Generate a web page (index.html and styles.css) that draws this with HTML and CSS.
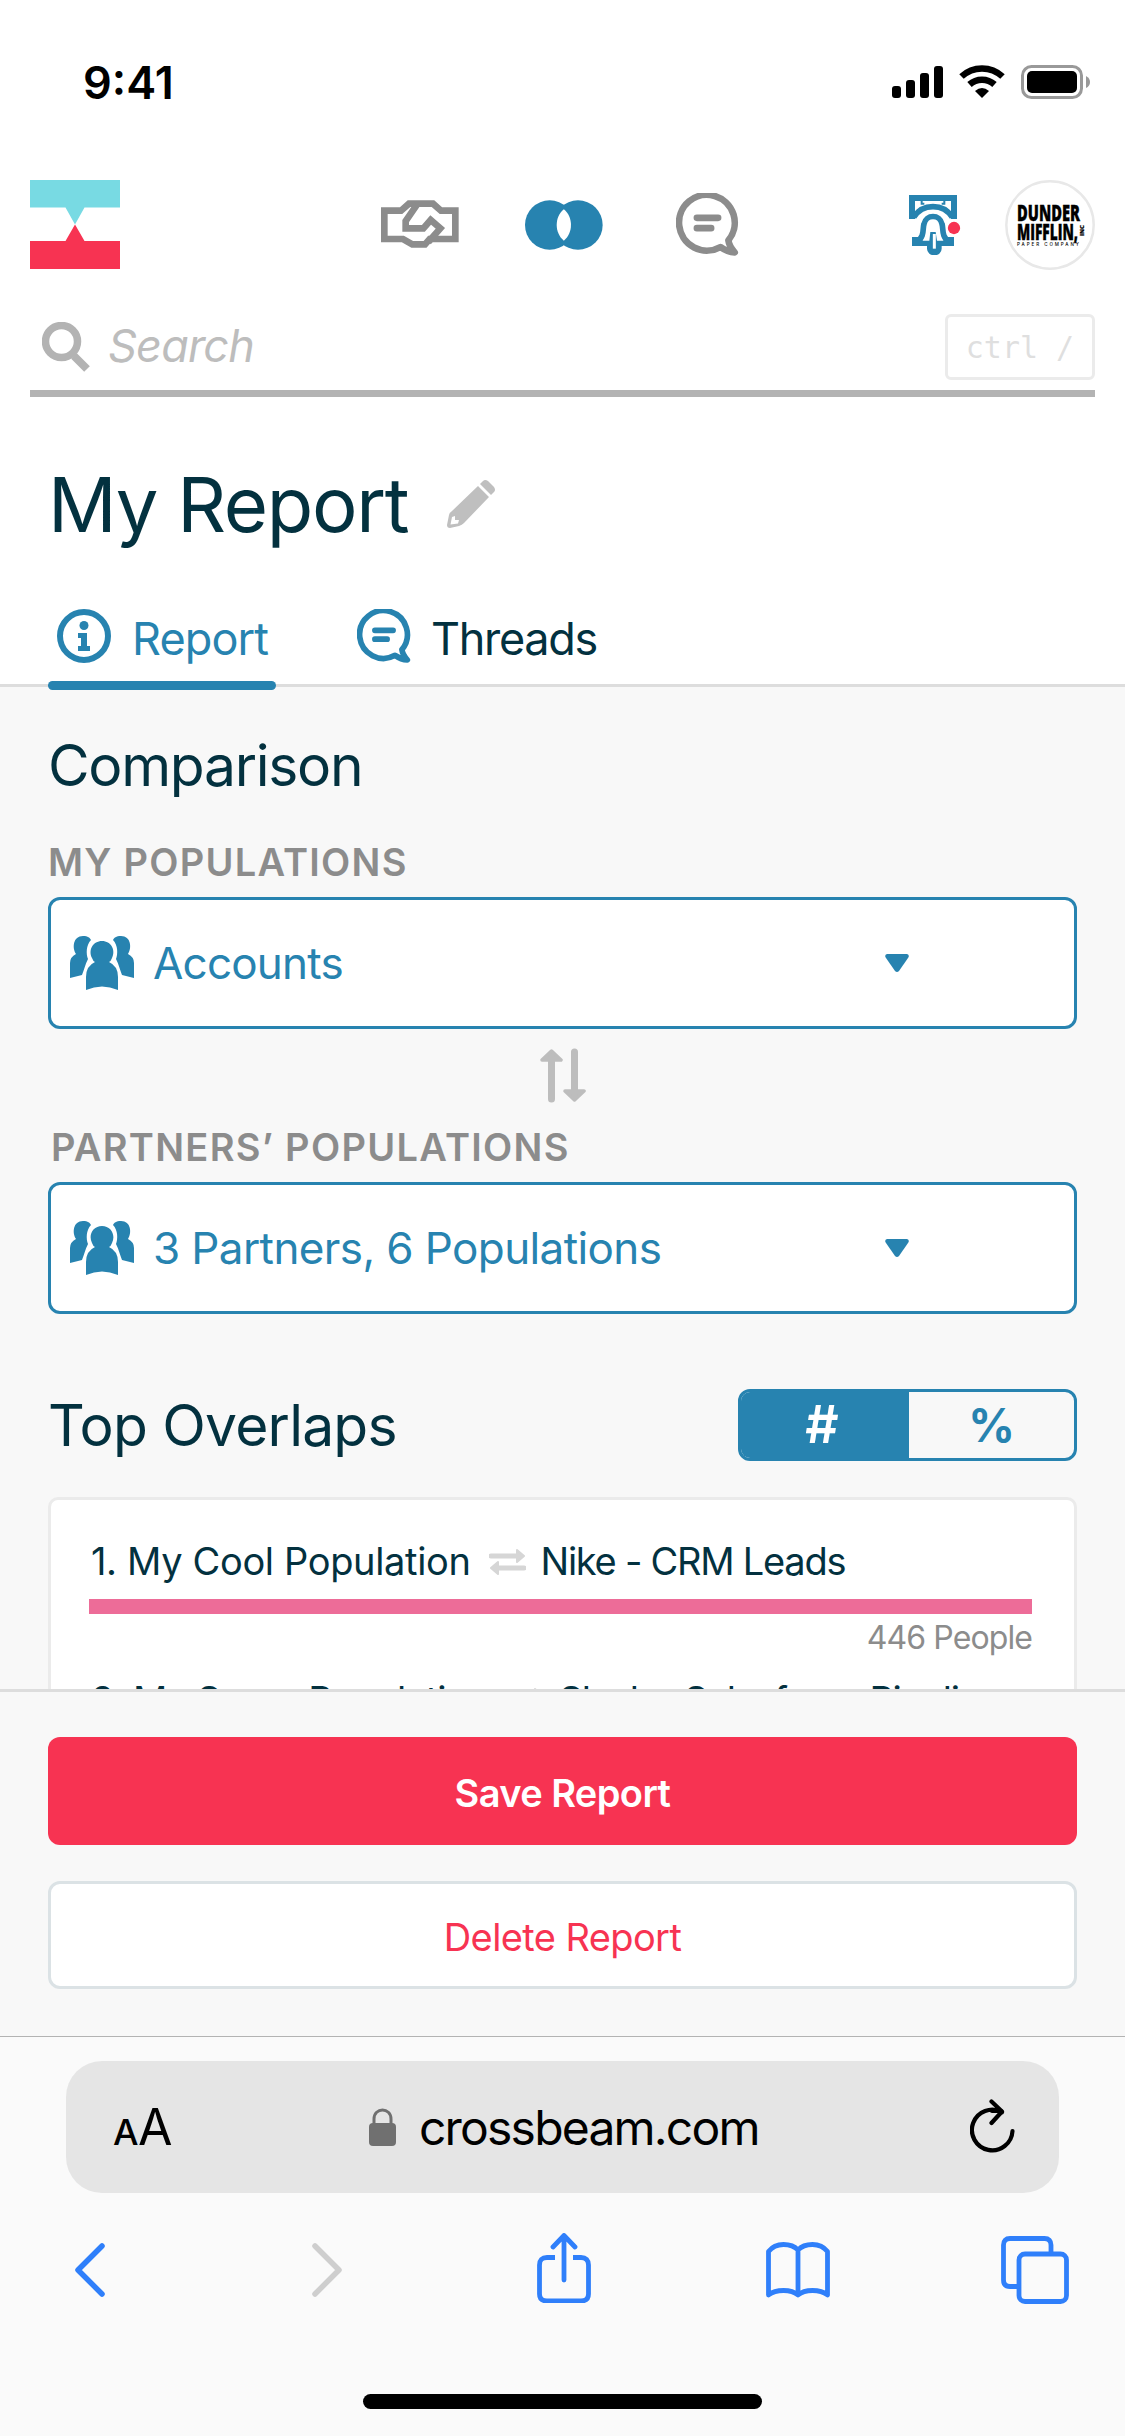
FILE: index.html
```html
<!DOCTYPE html>
<html lang="en">
<head>
<meta charset="utf-8">
<title>My Report</title>
<link rel="stylesheet" href="styles.css">
</head>
<body>
<svg class="defs" width="0" height="0">
  <symbol id="chat" viewBox="0 0 190 190">
    <path d="M134 163A84 84 0 1 1 158 143Q160 160 177 179Q155 178 134 163Z" fill="none" stroke="currentColor" stroke-width="20" stroke-linejoin="round"/>
    <path d="M63 75H127M63 106H106" stroke="currentColor" stroke-width="20" stroke-linecap="round"/>
  </symbol>
  <symbol id="people" viewBox="0 0 64 54">
    <path d="M13 0C18 0 20 2 21 4C16 9 16 18 18 23C15 29 14 34 12 39L0 42V27Q0 21 6 18C2 12 3 0 13 0Z"/>
    <path d="M51 0C46 0 44 2 43 4C48 9 48 18 46 23C49 29 50 34 52 39L64 42V27Q64 21 58 18C62 12 61 0 51 0Z"/>
    <path d="M32 5C41 5 46 14 42 22Q41 25 39 26Q48 30 48 41V54Q32 47 16 54V41Q16 30 25 26Q23 25 22 22C18 14 23 5 32 5Z"/>
  </symbol>
  <symbol id="swap" viewBox="0 0 37 27">
    <path d="M2 8H30M35 20H7" stroke="currentColor" stroke-width="5" stroke-linecap="round"/>
    <path d="M28 2L35 8L28 14ZM9 14L2 20L9 26Z" fill="currentColor" stroke="currentColor" stroke-width="2" stroke-linejoin="round"/>
  </symbol>
  <symbol id="caret" viewBox="0 0 24 18">
    <path d="M2 0H22Q25 1 23 4L14 17Q12 19 10 17L1 4Q-1 1 2 0Z"/>
  </symbol>
</svg>

<div class="status">
  <div class="time">9:41</div>
  <svg class="signal" viewBox="0 0 51 33"><rect y="20" width="9" height="12" rx="3"/><rect x="14" y="14" width="9" height="18" rx="3"/><rect x="28" y="7" width="9" height="25" rx="3"/><rect x="42" width="9" height="32" rx="3"/></svg>
  <svg class="wifi" viewBox="0 0 46 33"><path d="M2.5 11.5A30 30 0 0 1 43.500 11.500M10.500 19.500A18.500 18.500 0 0 1 35.500 19.500" fill="none" stroke="#000" stroke-width="6.500"/><path d="M16 26Q23 20 30 26L23 33Z"/></svg>
  <svg class="battery" viewBox="0 0 70 34"><rect x="1.500" y="1.500" width="59" height="31" rx="9" fill="none" stroke="#999" stroke-width="3"/><rect x="6" y="6" width="50" height="22" rx="5"/><path d="M65 11Q69 13 69 17T65 23Z" fill="#999"/></svg>
</div>

<header class="topbar">
  <svg class="logo" viewBox="0 0 90 90"><path d="M0 0H90V27.500H54.500L45 44.500L35.500 27.500H0Z" fill="#78dae3"/><path d="M0 89V61H35.500L45 44.500L54.500 61H90V89Z" fill="#f73352"/></svg>
  <svg class="shake" viewBox="18 90 234 144" fill="none" stroke="#8c8c8c" stroke-width="20"><path d="M28 122H78L102 101H174L198 122H241V207H164L150 223H112L84 207H28Z"/><path d="M126 104L92 153V175H145L167 150L196 175L160 216"/></svg>
  <svg class="venn" viewBox="450 90 234 150"><circle cx="524" cy="165" r="74"/><circle cx="609" cy="165" r="74"/><path d="M566.500 118C595 140 595 190 566.500 212C538 190 538 140 566.500 118Z" fill="#fff"/></svg>
  <svg class="chat"><use href="#chat"/></svg>
  <svg class="bell" viewBox="42 75 156 180">
    <g fill="none" stroke="#2783b0"><path d="M51 147V84H177V147" stroke-width="18"/><path d="M56 142Q76 110 114 110T172 142" stroke-width="17"/><path d="M80 90V101H88M148 90V101H140" stroke-width="6"/><path d="M66 214C90 200 82 176 87 162C93 132 135 132 141 162C146 176 138 200 162 214" stroke-width="17"/></g>
    <path d="M51 201H72L84 212H103L106 186H122L126 212H144L156 201H177V228H140V236A22 20 0 0 1 96 236V228H51Z" fill="#2783b0"/>
    <path d="M118 192V236" stroke="#fff" stroke-width="9"/>
    <circle cx="177" cy="174" r="18.500" fill="#f73352"/>
  </svg>
  <svg class="avatar" viewBox="0 0 90 90"><circle cx="45" cy="45" r="43.700" fill="#fff" stroke="#e8e8e8" stroke-width="2.500"/>
    <g class="brand"><text x="12" y="41" font-size="22" textLength="63" lengthAdjust="spacingAndGlyphs">DUNDER</text><text x="12" y="59.500" font-size="22" textLength="61" lengthAdjust="spacingAndGlyphs">MIFFLIN,</text><text class="inc" font-size="5" textLength="11" lengthAdjust="spacingAndGlyphs" transform="translate(78.500 56) rotate(-90)">INC</text></g>
    <text class="paper" x="12" y="65.500" font-size="4.500" textLength="62">PAPER COMPANY</text></svg>
</header>

<div class="search">
  <svg class="glass" viewBox="0 0 48 50" fill="none" stroke="#b3b3b3"><circle cx="19.500" cy="19.500" r="16" stroke-width="7.500"/><path d="M32 34L45 47" stroke-width="8"/></svg>
  <span class="placeholder">Search</span>
  <kbd>ctrl /</kbd>
</div>

<div class="title">
  <h1>My Report</h1>
  <svg class="pencil" viewBox="0 0 48 48"><path d="M31 6L42 17L17 43Q15 45 12 46L3 48Q0 48 0 45L2 35Q2 33 5 31ZM5 37L3.500 44.500L11 43.500L12 40L8 40L8 36Z" fill-rule="evenodd"/><path d="M33 4L36 1Q38-1 41 1L47 7Q49 10 47 12L44 15Z"/></svg>
</div>

<nav class="tabs">
  <a class="tab active"><svg class="tabicon" viewBox="0 0 54 54"><circle cx="27" cy="27" r="24" fill="none" stroke="currentColor" stroke-width="6"/><circle cx="27" cy="16.500" r="4.500"/><path d="M21 24H30V37H33V42H21V37H24V29H21Z"/></svg><span>Report</span></a>
  <a class="tab"><svg class="tabicon"><use href="#chat"/></svg><span>Threads</span></a>
</nav>

<main>
  <h2 class="comparison">Comparison</h2>
  <h3>MY POPULATIONS</h3>
  <div class="select"><svg class="people"><use href="#people"/></svg><span>Accounts</span><svg class="caret"><use href="#caret"/></svg></div>
  <div class="between"><svg viewBox="0 0 46 56"><path d="M11.500 10V51M34.500 4V45" stroke="#bdbdbd" stroke-width="7" stroke-linecap="round"/><path d="M11.500 3L21 12H2ZM34.500 52L44 43H25Z" fill="#bdbdbd" stroke="#bdbdbd" stroke-width="3.500" stroke-linejoin="round"/></svg></div>
  <h3 class="partners">PARTNERS’ POPULATIONS</h3>
  <div class="select"><svg class="people"><use href="#people"/></svg><span class="count">3 Partners, 6 Populations</span><svg class="caret"><use href="#caret"/></svg></div>
  <div class="overlaps"><h2>Top Overlaps</h2><div class="toggle"><b class="on">#</b><b>%</b></div></div>
  <section class="card">
    <div class="row"><div class="names"><span class="mine">1. My Cool Population</span><svg class="swap"><use href="#swap"/></svg><span class="theirs">Nike - CRM Leads</span></div><div class="bar"></div><div class="people-count">446 People</div></div>
    <div class="row"><div class="names"><span class="mine tight">2. My Super Population</span><svg class="swap"><use href="#swap"/></svg><span class="theirs tight">Slack - Salesforce Pipeline</span></div></div>
  </section>
</main>

<div class="actions"><button class="save">Save Report</button><button class="delete">Delete Report</button></div>

<footer>
  <div class="url"><span class="aa"><small>A</small>A</span>
    <svg class="lock" viewBox="0 0 27 38"><rect y="15" width="27" height="23" rx="4" fill="#707070"/><path d="M5 17V11C5-1 22-1 22 11V17" fill="none" stroke="#707070" stroke-width="3"/></svg>
    <span class="domain">crossbeam.com</span>
    <svg class="reload" viewBox="0 0 45 54" fill="none" stroke="#000" stroke-width="4.200" stroke-linecap="round" stroke-linejoin="round"><path d="M42.500 32A20.300 20.300 0 1 1 32 13.200M21.500 2.500L32 12.500L21.500 24"/><path d="M22 12H31"/></svg></div>
  <div class="tools">
    <svg class="back" viewBox="0 0 30 54"><path d="M27 3L3 27L27 51" stroke-width="5.500"/></svg>
    <svg class="forward" viewBox="0 0 30 54"><path d="M3 3L27 27L3 51" stroke-width="5.500"/></svg>
    <svg class="share" viewBox="0 0 54 70"><path d="M18 24.500H10Q2.500 24.500 2.500 32V61Q2.500 68 10 68H44Q51.500 68 51.500 61V32Q51.500 24.500 44 24.500H36" stroke-linecap="butt"/><path d="M27 47V3M16 14L27 2.500L38 14"/></svg>
    <svg class="book" viewBox="0 0 64 56"><path d="M32 8Q27 2.500 17.500 2.500T2.500 9.500V53Q8 48.500 17.500 48.500T32 53Q37 48.500 46.500 48.500T61.500 53V9.500Q56 2.500 46.500 2.500T32 8V53"/></svg>
    <svg class="windows" viewBox="0 0 68 68"><rect x="18" y="18" width="47.500" height="47.500" rx="6"/><path d="M50 17V9Q50 2.500 43.500 2.500H9Q2.500 2.500 2.500 9V44Q2.500 50.500 9 50.500H17"/></svg>
  </div>
  <div class="home"></div>
</footer>
</body>
</html>
```
FILE: styles.css
```css
* { box-sizing: border-box; }
body { margin: 0; width: 1125px; height: 2436px; overflow: hidden; display: flex; flex-direction: column; background: #fff; color: #03313f; font-family: Inter, "Liberation Sans", sans-serif; }
h1, h2, h3 { margin: 0; font-weight: 400; white-space: nowrap; }
svg { display: block; flex: none; }
span { white-space: nowrap; }
.defs { position: absolute; }

.status { height: 180px; flex: none; display: flex; padding: 65px 34px 0 0; color: #000; }
.time { margin: -9px auto 0 83px; font-size: 45px; line-height: 54px; font-weight: 600; letter-spacing: 0; }
.signal { width: 51px; height: 33px; margin: 1px 16px 0 0; }
.wifi { width: 46px; height: 33px; margin-right: 16px; }
.battery { width: 70px; height: 34px; }

.topbar { height: 90px; flex: none; display: flex; align-items: flex-start; padding: 0 30px; }
.logo { width: 90px; height: 90px; margin-right: 261px; }
.shake { width: 78px; height: 48px; margin: 20px 66px 0 0; }
.venn { width: 78px; height: 50px; margin: 20px 73px 0 0; fill: #2783b0; }
.chat { width: 63px; height: 63px; margin-top: 13px; color: #8c8c8c; }
.bell { width: 52px; height: 60px; margin: 15px 44px 0 auto; }
.avatar { width: 90px; height: 90px; }
.brand { font-family: "Open Sans", sans-serif; font-weight: 800; stroke: #000; stroke-width: 0.4; }
.inc { stroke-width: 0.2; }
.paper { font-weight: 500; }

.search { height: 97px; flex: none; margin: 30px 30px 0; border-bottom: 7px solid #b3b3b3; display: flex; align-items: flex-start; }
.glass { width: 48px; height: 50px; margin: 22px 0 0 12px; }
.placeholder { margin: 18px auto 0 18px; font-size: 45px; line-height: 56px; font-style: italic; font-weight: 400; letter-spacing: -0.8px; color: #bdbdbd; }
kbd { width: 150px; height: 66px; margin-top: 14px; border: 3px solid #ebebeb; border-radius: 6px; color: #dfdfdf; font: 30px/62px "DejaVu Sans Mono", monospace; text-align: center; white-space: pre; }

.title { height: 212px; flex: none; display: flex; padding: 61px 48px 0; }
h1 { font-size: 76px; line-height: 92px; letter-spacing: -1.3px; width: 399px; }
.pencil { width: 48px; height: 48px; margin-top: 22px; fill: #bfbfbf; }

.tabs { height: 78px; flex: none; display: flex; align-items: flex-start; padding-left: 48px; border-bottom: 3px solid #ddd; }
.tab { display: flex; height: 81px; font-size: 45px; line-height: 54px; padding-left: 9px; letter-spacing: -0.9px; }
.tab span { margin: 3px 0 0 21px; }
.tab + .tab { margin-left: 72px; letter-spacing: -1.3px; }
.tab + .tab span { margin-left: 20px; }
.tabicon { width: 54px; height: 54px; color: #2783b0; fill: #2783b0; }
.active { width: 228px; color: #2783b0; position: relative; }
.active::after { content: ""; position: absolute; left: 0; bottom: 0; width: 228px; height: 9px; border-radius: 5px; background: #2783b0; }

main { height: 1002px; flex: none; overflow: hidden; background: #f8f8f8; padding: 0 48px; }
h2 { font-size: 57px; line-height: 68px; letter-spacing: -0.8px; }
.comparison { padding-top: 45px; height: 154px; letter-spacing: -1.3px; }
h3 { height: 56px; font-size: 38px; line-height: 43px; font-weight: 600; color: #8c8c8c; letter-spacing: 1.25px; }
.partners { padding-left: 3px; letter-spacing: 1.3px; }
.select { height: 132px; border: 3px solid #2783b0; border-radius: 12px; background: #fff; display: flex; align-items: center; padding: 0 165px 0 19px; color: #2783b0; fill: #2783b0; font-size: 44px; }
.select span { margin: 0 auto 0 19px; letter-spacing: -0.8px; }
.select .count { letter-spacing: -0.6px; }
.people { width: 64px; height: 54px; }
.caret { width: 24px; height: 18px; }
.between { height: 97px; padding: 19px 0 0 1px; display: flex; justify-content: center; }
.between svg { width: 46px; height: 56px; }
.overlaps { display: flex; justify-content: space-between; align-items: center; height: 72px; margin: 75px 0 36px; }
.overlaps h2 { padding-top: 2px; }
.toggle { display: flex; width: 339px; height: 72px; border: 3px solid #2783b0; border-radius: 12px; color: #2783b0; overflow: hidden; }
.toggle b { flex: 1; text-align: center; font-size: 46px; line-height: 66px; font-weight: 700; }
.toggle .on { background: #2783b0; color: #fff; flex: 0 0 168px; font-size: 52px; font-weight: 600; padding-right: 6px; }
.card { height: 300px; border: 3px solid #ebebeb; border-radius: 10px; background: #fff; padding: 36px 42px 0 38px; }
.row { height: 139px; }
.names { display: flex; align-items: center; height: 50px; font-size: 38px; padding-left: 2px; }
.mine { letter-spacing: -0.35px; }
.mine.tight { letter-spacing: -0.95px; }
.theirs { letter-spacing: -1.25px; }
.theirs.tight { letter-spacing: -1.4px; }
.swap { width: 37px; height: 27px; margin: 0 15px 0 18px; color: #d6d6d6; }
.bar { height: 15px; margin-top: 13px; background: #ed6c98; }
.people-count { text-align: right; font-size: 32px; line-height: 39px; margin-top: 4px; letter-spacing: -0.9px; color: #8c8c8c; }

.actions { height: 347px; flex: none; background: #f8f8f8; border-top: 3px solid #ddd; padding: 45px 48px 0; display: flex; flex-direction: column; gap: 36px; }
button { height: 108px; border: 0; border-radius: 12px; font: 600 38px Inter, sans-serif; letter-spacing: -0.6px; color: #fff; background: #f73352; padding: 3px 0 0; }
.delete { font-weight: 400; background: #fff; border: 3px solid #dbe2e5; color: #f73352; }

footer { height: 400px; background: #fafafa; border-top: 1px solid #b3b3b3; color: #000; }
.url { width: 993px; height: 132px; margin: 24px 0 0 66px; border-radius: 36px; background: #e5e5e5; display: flex; align-items: flex-start; }
.aa { margin: 35px 0 0 47px; width: 256px; font-size: 50px; line-height: 62px; letter-spacing: -0.5px; }
.aa small { font-size: 36px; font-weight: 500; }
.lock { width: 27px; height: 38px; margin-top: 47px; }
.domain { margin: 36px auto 0 23px; font-size: 48px; line-height: 62px; letter-spacing: -1.8px; }
.reload { width: 45px; height: 54px; margin: 38px 44px 0 0; }
.tools { height: 201px; padding: 0 56px 0 75px; display: flex; align-items: flex-start; fill: none; stroke: #2f7ffa; stroke-width: 4.8px; stroke-linecap: round; stroke-linejoin: round; }
.back { width: 30px; height: 54px; margin: 50px 207px 0 0; }
.forward { width: 30px; height: 54px; margin: 50px 195px 0 0; stroke: #cecece; }
.share { width: 54px; height: 70px; margin: 40px 175px 0 0; }
.book { width: 64px; height: 56px; margin-top: 49px; }
.windows { width: 68px; height: 68px; margin: 43px 0 0 auto; }
.home { width: 399px; height: 15px; border-radius: 8px; margin: 0 auto; background: #000; }
```
